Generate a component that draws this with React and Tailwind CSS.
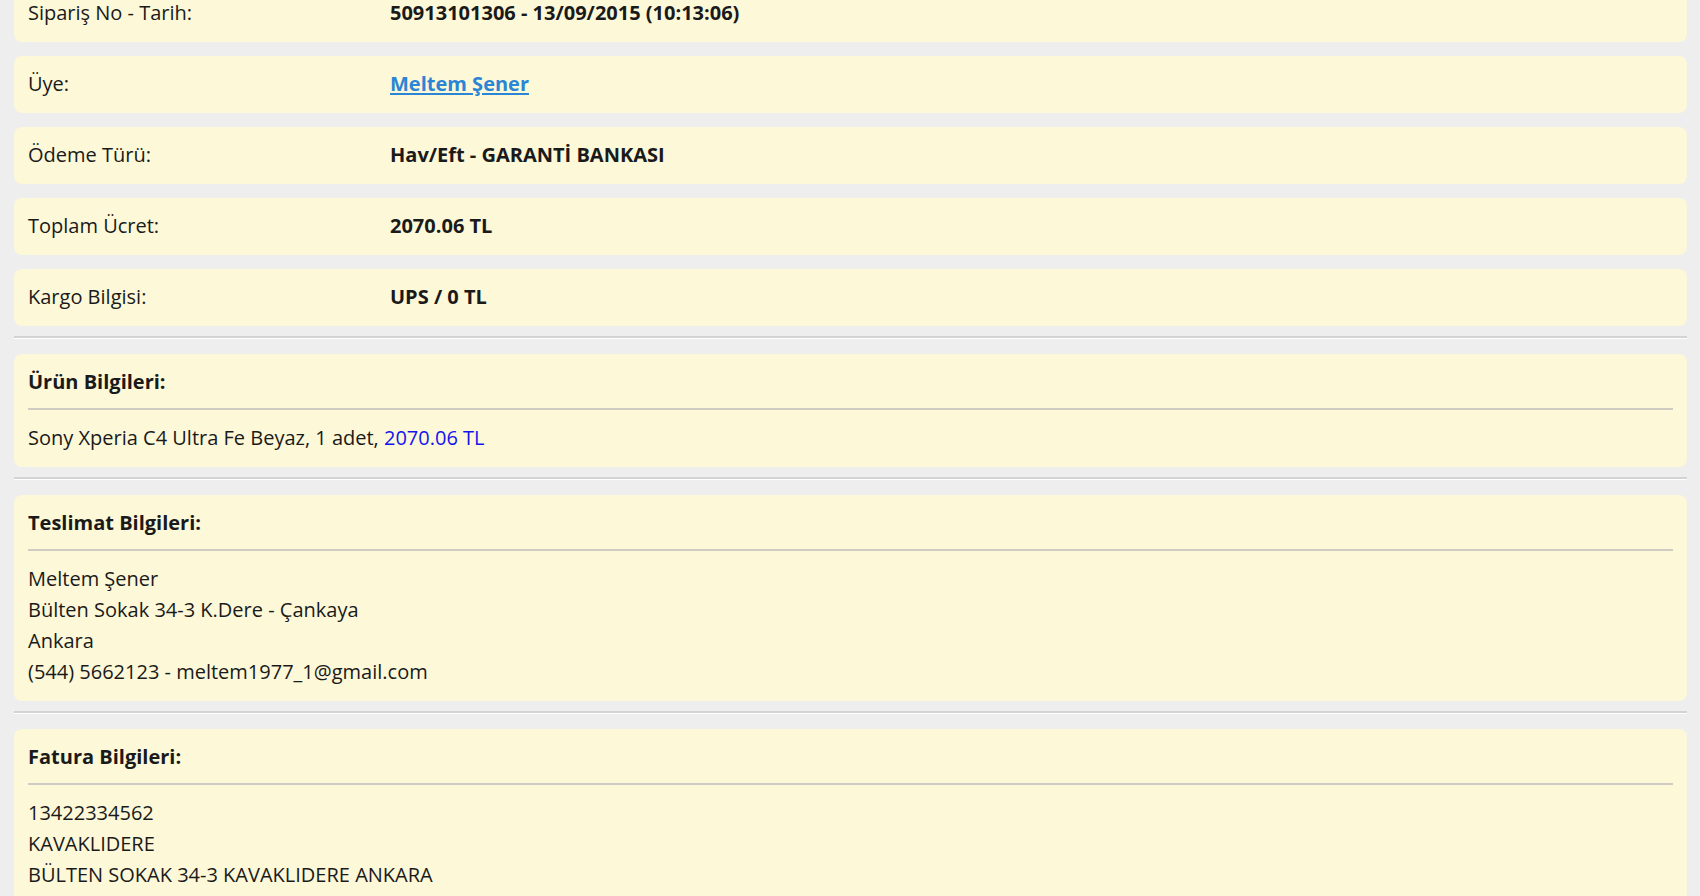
import React from "react";

const font = { fontFamily: '"Open Sans", "Noto Sans", sans-serif' };

function Row({ label, children }) {
  return (
    <div className="flex rounded-lg bg-[#fcf8d8] px-[14px] pt-[12px] pb-[14px] text-[20px] leading-[31px] text-[#1a1a1a]">
      <div className="w-[362px] shrink-0">{label}</div>
      <div className="font-bold">{children}</div>
    </div>
  );
}

function Section({ title, children }) {
  return (
    <div className="rounded-lg bg-[#fcf8d8] px-[14px] pt-[12px] pb-[14px] text-[20px] leading-[31px] text-[#1a1a1a]">
      <div className="font-bold">{title}</div>
      <div className="mt-[11px] mb-[12px] h-[2px] bg-[#cfcdc2]" />
      <div>{children}</div>
    </div>
  );
}

function Sep() {
  return <div className="mt-[10px] mb-[15px] h-[3px] border-t-2 border-[#d3d3d3] bg-white" />;
}

export default function App() {
  return (
    <div className="min-h-[896px] overflow-hidden bg-[#eeeeee] pl-[14px] pr-[13px]" style={font}>
      <div className="-mt-[15px] flex flex-col">
        <div className="flex flex-col gap-[14px]">
          <Row label="Sipariş No - Tarih:">50913101306 - 13/09/2015 (10:13:06)</Row>
          <Row label="Üye:">
            <a href="#" className="text-[#2a86d4] underline decoration-2 underline-offset-2">Meltem Şener</a>
          </Row>
          <Row label="Ödeme Türü:">Hav/Eft - GARANTİ BANKASI</Row>
          <Row label="Toplam Ücret:">2070.06 TL</Row>
          <Row label="Kargo Bilgisi:">UPS / 0 TL</Row>
        </div>
        <Sep />
        <Section title="Ürün Bilgileri:">
          Sony Xperia C4 Ultra Fe Beyaz, 1 adet, <span className="text-[#1414f0]">2070.06 TL</span>
        </Section>
        <Sep />
        <Section title="Teslimat Bilgileri:">
          <div>Meltem Şener</div>
          <div>Bülten Sokak 34-3 K.Dere - Çankaya</div>
          <div>Ankara</div>
          <div>(544) 5662123 - meltem1977_1@gmail.com</div>
        </Section>
        <Sep />
        <Section title="Fatura Bilgileri:">
          <div>13422334562</div>
          <div>KAVAKLIDERE</div>
          <div>BÜLTEN SOKAK 34-3 KAVAKLIDERE ANKARA</div>
          <div>bireysel</div>
        </Section>
      </div>
    </div>
  );
}
